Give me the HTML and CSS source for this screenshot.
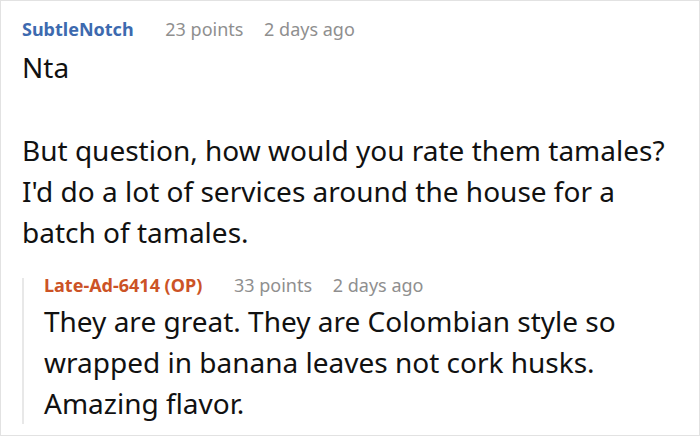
FILE: index.html
```html
<!DOCTYPE html>
<html>
<head>
<meta charset="utf-8">
<link rel="stylesheet" href="styles.css">
</head>
<body>
<div class="frame">
  <div class="comment">
    <div class="meta">
      <span class="author">SubtleNotch</span>
      <span class="points">23 points</span>
      <span class="time">2 days ago</span>
    </div>
    <div class="body">
      <p>Nta</p>
      <p>But question, how would you rate them tamales? I'd do a lot of services around the house for a batch of tamales.</p>
    </div>
  </div>
  <div class="reply">
    <div class="meta meta-reply">
      <span class="author op">Late-Ad-6414 (OP)</span>
      <span class="points">33 points</span>
      <span class="time">2 days ago</span>
    </div>
    <div class="body body-reply">
      <p>They are great. They are Colombian style so wrapped in banana leaves not cork husks. Amazing flavor.</p>
    </div>
  </div>
</div>
</body>
</html>
```

FILE: styles.css
```css
html, body {
  margin: 0;
  padding: 0;
  background: #ffffff;
}

.frame {
  box-sizing: border-box;
  width: 700px;
  height: 436px;
  border: 1px solid #e2e2e2;
  padding: 17px 20px 0 21px;
  font-family: "Noto Sans", "Open Sans", sans-serif;
  color: #111111;
  overflow: hidden;
}

.meta {
  font-size: 18px;
  line-height: 22px;
  margin-bottom: 7px;
  white-space: nowrap;
}

.author {
  font-weight: 700;
  color: #3d6aaf;
}

.author.op {
  color: #cc5326;
}

.points {
  color: #8f8f8f;
  margin-left: 27px;
}

.time {
  color: #8f8f8f;
  margin-left: 16px;
}

.body {
  font-size: 28px;
  line-height: 41px;
}

.body p {
  margin: 0 0 42px 0;
}

.body p:last-child {
  margin-bottom: 0;
}

.reply {
  margin-top: 25px;
  border-left: 2px solid #e8e8e8;
  padding-left: 20px;
}

.meta-reply {
  line-height: 15px;
  margin-bottom: 8px;
}
```
